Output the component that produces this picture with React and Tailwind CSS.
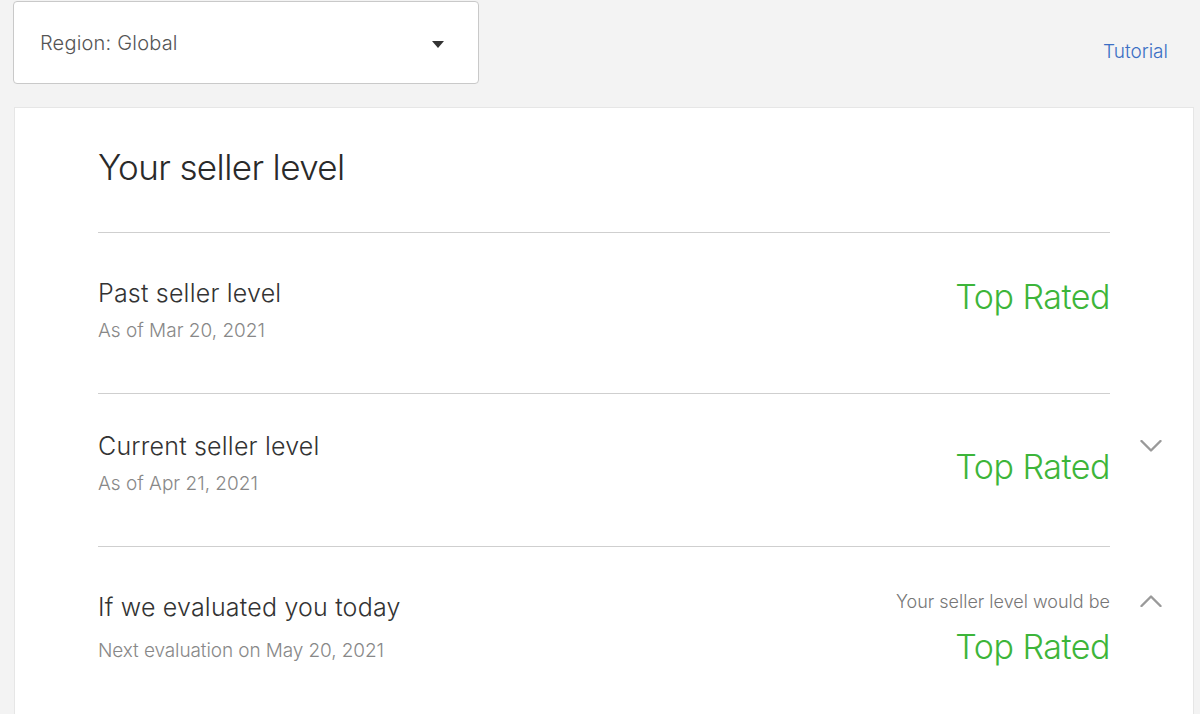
const ROWS = [
  { title: 'Past seller level', sub: 'As of Mar 20, 2021', pt: 'pt-[45px]', pb: 'pb-[50px]', rt: '-mt-[1px]', chevron: null },
  { title: 'Current seller level', sub: 'As of Apr 21, 2021', pt: 'pt-[37px]', pb: 'pb-[50px]', rt: 'mt-[16px]', chevron: 'down' },
]

const font = { fontFamily: 'Inter, "Liberation Sans", sans-serif' }

function Chevron({ up, className }) {
  return (
    <svg width="22" height="12" viewBox="0 0 22 12" fill="none" className={className}>
      <polyline
        points={up ? '1.5,11 11,1.5 20.5,11' : '1.5,1 11,10.5 20.5,1'}
        stroke="#9a9a9a" strokeWidth="2.4" strokeLinecap="round" strokeLinejoin="round"
      />
    </svg>
  )
}

export default function App() {
  return (
    <div className="h-[714px] overflow-hidden bg-[#f3f3f3] px-[13px] pt-px text-[#333] font-light" style={font}>
      {/* Barra superiore */}
      <div className="flex items-start justify-between">
        <button className="flex h-[83px] w-[466px] items-center justify-between rounded-[4px] border border-[#c9c9c9] bg-white pl-[26px] pr-[34px] text-left">
          <span className="text-[20px] text-[#555] tracking-[0.2px]">Region: Global</span>
          <span className="mt-[3px] h-0 w-0 border-x-[6.5px] border-t-[7px] border-x-transparent border-t-[#333]" />
        </button>
        <a href="#" className="mt-[37px] mr-[19px] text-[19px] text-[#3b6fc4]">Tutorial</a>
      </div>

      {/* Card livello venditore */}
      <div className="mt-[23px] ml-px w-[1180px] border border-[#e6e6e6] bg-white">
        <div className="pl-[83px] pr-[83px]">
          <h2 className="pt-[39px] pb-[45px] text-[35px] leading-[40px] text-[#2a2a2a] tracking-[-0.6px]">Your seller level</h2>
        </div>

        {ROWS.map(r => (
          <div key={r.title} className="flex pl-[83px]">
            <div className={`flex flex-1 justify-between border-t border-[#cfcfcf] ${r.pt} ${r.pb}`}>
              <div>
                <div className="text-[25px] leading-[30px] text-[#333] tracking-[0.2px]">{r.title}</div>
                <div className="mt-[11px] text-[19px] leading-[24px] text-[#888]">{r.sub}</div>
              </div>
              <div className={`${r.rt} text-[34px] leading-[40px] text-[#3db53a] tracking-[-0.5px]`}>Top Rated</div>
            </div>
            <div className="w-[83px] pl-[30px]">
              {r.chevron === 'down' && <Chevron className="mt-[47px]" />}
            </div>
          </div>
        ))}

        <div className="flex pl-[83px]">
          <div className="flex flex-1 justify-between border-t border-[#cfcfcf] pt-[45px] pb-[80px]">
            <div>
              <div className="text-[25px] leading-[30px] text-[#333] tracking-[0.2px]">If we evaluated you today</div>
              <div className="mt-[17px] text-[19px] leading-[24px] text-[#888] tracking-[-0.1px]">Next evaluation on May 20, 2021</div>
            </div>
            <div className="-mt-[1px] flex flex-col items-end">
              <div className="text-[18px] leading-[22px] text-[#777]">Your seller level would be</div>
              <div className="mt-[14px] text-[34px] leading-[40px] text-[#3db53a] tracking-[-0.5px]">Top Rated</div>
            </div>
          </div>
          <div className="w-[83px] pl-[30px]">
            <Chevron up className="mt-[49px]" />
          </div>
        </div>
      </div>
    </div>
  )
}
